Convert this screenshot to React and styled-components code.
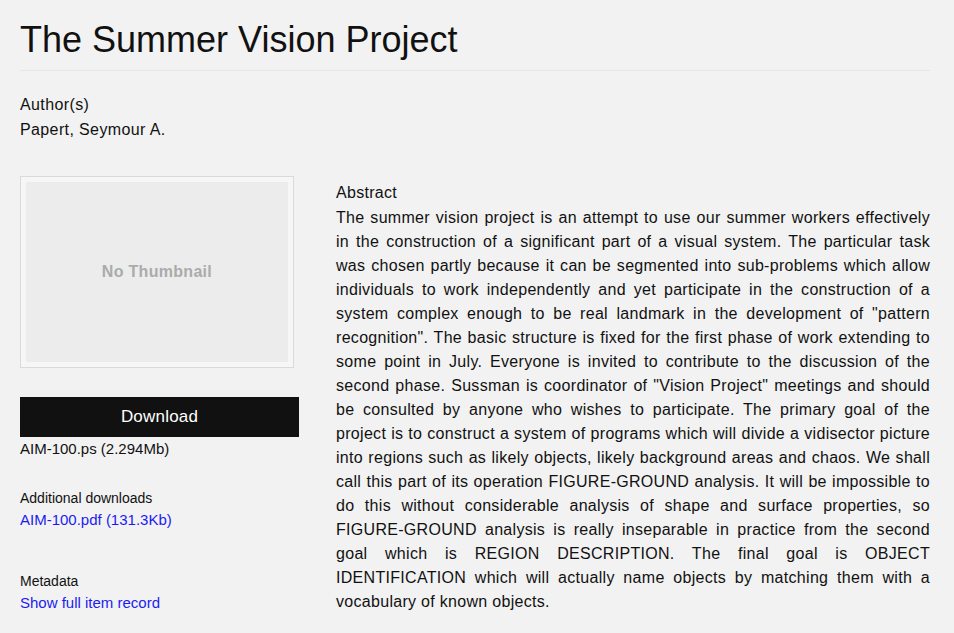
import React from "react";
import styled, { createGlobalStyle } from "styled-components";

const Global = createGlobalStyle`
  html, body { margin: 0; padding: 0; background: #f2f2f2; }
  body { font-family: "Liberation Sans", Arial, sans-serif; color: #111; }
`;

const Page = styled.div`
  padding: 0 24px 0 20px;
`;

const Title = styled.h1`
  margin: 0;
  padding: 21px 0 11px;
  font-size: 36px;
  font-weight: 400;
  line-height: 38px;
  color: #111;
  border-bottom: 1px solid #e6e6e6;
`;

const Authors = styled.div`
  margin-top: 21px;
  font-size: 16px;
  line-height: 25px;
  letter-spacing: 0.38px;
`;

const Label = styled.div`
  font-size: 16px;
  line-height: 24px;
  letter-spacing: 0.3px;
`;

const Columns = styled.div`
  display: grid;
  grid-template-columns: 279px 1fr;
  column-gap: 37px;
  margin-top: 34px;
`;

const Side = styled.div`
  display: flex;
  flex-direction: column;
`;

const Thumb = styled.div`
  width: 274px;
  height: 192px;
  box-sizing: border-box;
  border: 1px solid #dadada;
  padding: 5px;
  background: #f6f6f6;
`;

const ThumbInner = styled.div`
  height: 100%;
  background: #ececec;
  display: flex;
  align-items: center;
  justify-content: center;
  font-size: 16px;
  font-weight: 700;
  letter-spacing: 0.3px;
  color: #ababab;
`;

const DownloadButton = styled.a`
  display: flex;
  align-items: center;
  justify-content: center;
  margin-top: 29px;
  height: 40px;
  background: #111;
  color: #fff;
  font-size: 17px;
  letter-spacing: 0.2px;
  text-decoration: none;
`;

const FileName = styled.div`
  font-size: 15px;
  line-height: 22px;
  margin-top: 1px;
`;

const Block = styled.div`
  margin-top: ${p => p.$top}px;
  font-size: 14px;
  line-height: 22px;
`;

const Link = styled.a`
  display: block;
  font-size: 15px;
  color: #1c1cf2;
  text-decoration: none;
`;

const Main = styled.div`
  padding-top: 5px;
`;

const AbstractText = styled.p`
  margin: 1px 0 0;
  font-size: 16px;
  line-height: 24px;
  letter-spacing: 0.3px;
  text-align: justify;
  color: #111;
`;

export default function App() {
  return (
    <>
      <Global />
      <Page>
        <Title>The Summer Vision Project</Title>
        <Authors>
          <div>Author(s)</div>
          <div>Papert, Seymour A.</div>
        </Authors>
        <Columns>
          <Side>
            <Thumb>
              <ThumbInner>No Thumbnail</ThumbInner>
            </Thumb>
            <DownloadButton href="#">Download</DownloadButton>
            <FileName>AIM-100.ps (2.294Mb)</FileName>
            <Block $top={27}>
              <div>Additional downloads</div>
              <Link href="#">AIM-100.pdf (131.3Kb)</Link>
            </Block>
            <Block $top={39}>
              <div>Metadata</div>
              <Link href="#">Show full item record</Link>
            </Block>
          </Side>
          <Main>
            <Label>Abstract</Label>
            <AbstractText>
              The summer vision project is an attempt to use our summer workers effectively in the construction of a significant part of a visual system. The particular task was chosen partly because it can be segmented into sub-problems which allow individuals to work independently and yet participate in the construction of a system complex enough to be real landmark in the development of "pattern recognition". The basic structure is fixed for the first phase of work extending to some point in July. Everyone is invited to contribute to the discussion of the second phase. Sussman is coordinator of "Vision Project" meetings and should be consulted by anyone who wishes to participate. The primary goal of the project is to construct a system of programs which will divide a vidisector picture into regions such as likely objects, likely background areas and chaos. We shall call this part of its operation FIGURE-GROUND analysis. It will be impossible to do this without considerable analysis of shape and surface properties, so FIGURE-GROUND analysis is really inseparable in practice from the second goal which is REGION DESCRIPTION. The final goal is OBJECT IDENTIFICATION which will actually name objects by matching them with a vocabulary of known objects.
            </AbstractText>
          </Main>
        </Columns>
      </Page>
    </>
  );
}
